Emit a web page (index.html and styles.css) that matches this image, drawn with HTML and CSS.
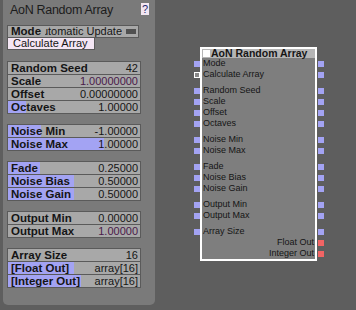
FILE: index.html
```html
<!DOCTYPE html>
<html lang="en">

<head>
    <meta charset="UTF-8">
    <title>AoN Random Array</title>
    <link rel="stylesheet" href="styles.css">
</head>

<body>
    <!-- Parameter panel -->
    <div class="panel">
        <div class="panel-head">
            <span class="panel-title">AoN Random Array</span>
            <span class="help">?</span>
        </div>

        <div class="mode-row">
            <span class="label">Mode</span>
            <span class="mode-value"><span>Automatic Update</span></span>
            <span class="mode-swatch"></span>
        </div>
        <div class="calc-btn">Calculate Array</div>

        <div class="group">
            <div class="row"><span class="label">Random Seed</span><span class="value">42</span></div>
            <div class="row"><span class="label">Scale</span><span class="value purple">1.00000000</span></div>
            <div class="row"><span class="label">Offset</span><span class="value">0.00000000</span></div>
            <div class="row" style="--fill: 14%"><span class="label">Octaves</span><span class="value">1.00000</span></div>
        </div>

        <div class="group">
            <div class="row" style="--fill: 25%"><span class="label">Noise Min</span><span class="value">-1.00000</span></div>
            <div class="row" style="--fill: 73%"><span class="label">Noise Max</span><span class="value">1.00000</span></div>
        </div>

        <div class="group">
            <div class="row" style="--fill: 24%"><span class="label">Fade</span><span class="value">0.25000</span></div>
            <div class="row" style="--fill: 50%"><span class="label">Noise Bias</span><span class="value">0.50000</span></div>
            <div class="row" style="--fill: 50%"><span class="label">Noise Gain</span><span class="value">0.50000</span></div>
        </div>

        <div class="group">
            <div class="row"><span class="label">Output Min</span><span class="value">0.00000</span></div>
            <div class="row"><span class="label">Output Max</span><span class="value purple">1.00000</span></div>
        </div>

        <div class="group">
            <div class="row"><span class="label">Array Size</span><span class="value">16</span></div>
            <div class="row" style="--fill: 50%"><span class="label">[Float Out]</span><span class="value">array[16]</span></div>
            <div class="row" style="--fill: 55%"><span class="label">[Integer Out]</span><span class="value">array[16]</span></div>
        </div>
    </div>

    <!-- Node on the canvas -->
    <div class="node">
        <div class="node-title"><span class="node-check"></span>AoN Random Array</div>

        <div class="node-group">
            <div class="node-row"><span class="pin in"></span>Mode<span class="pin out"></span></div>
            <div class="node-row"><span class="pin in hollow"></span>Calculate Array<span class="pin out"></span></div>
        </div>
        <div class="node-group">
            <div class="node-row"><span class="pin in"></span>Random Seed<span class="pin out"></span></div>
            <div class="node-row"><span class="pin in"></span>Scale<span class="pin out"></span></div>
            <div class="node-row"><span class="pin in"></span>Offset<span class="pin out"></span></div>
            <div class="node-row"><span class="pin in"></span>Octaves<span class="pin out"></span></div>
        </div>
        <div class="node-group">
            <div class="node-row"><span class="pin in"></span>Noise Min<span class="pin out"></span></div>
            <div class="node-row"><span class="pin in"></span>Noise Max<span class="pin out"></span></div>
        </div>
        <div class="node-group">
            <div class="node-row"><span class="pin in"></span>Fade<span class="pin out"></span></div>
            <div class="node-row"><span class="pin in"></span>Noise Bias<span class="pin out"></span></div>
            <div class="node-row"><span class="pin in"></span>Noise Gain<span class="pin out"></span></div>
        </div>
        <div class="node-group">
            <div class="node-row"><span class="pin in"></span>Output Min<span class="pin out"></span></div>
            <div class="node-row"><span class="pin in"></span>Output Max<span class="pin out"></span></div>
        </div>
        <div class="node-group">
            <div class="node-row"><span class="pin in"></span>Array Size<span class="pin out"></span></div>
            <div class="node-row output">Float Out<span class="pin out red"></span></div>
            <div class="node-row output">Integer Out<span class="pin out red"></span></div>
        </div>
    </div>
</body>

</html>
```

FILE: styles.css
```css
body {
    margin: 0;
    padding: 0;
    height: 310px;
    overflow: hidden;
    display: flex;
    align-items: flex-start;
    background: #5e5e5e;
    font-family: "Liberation Sans", Arial, sans-serif;
    color: #151515;
}

/* Parameter panel */
.panel {
    margin-left: 3px;
    width: 152px;
    height: 305px;
    box-sizing: border-box;
    padding: 3px 0 0 4px;
    background: #7a7a7a;
    border-radius: 0 0 5px 5px;
}

.panel-head {
    width: 142px;
    height: 14px;
    padding-left: 3px;
    box-sizing: border-box;
    display: flex;
    justify-content: space-between;
    align-items: flex-start;
}

.panel-title {
    font-size: 12.5px;
    line-height: 14px;
    letter-spacing: -0.3px;
    color: #1c1c1c;
}

.help {
    width: 8px;
    height: 12px;
    background: #f2e6f2;
    color: #1e2a70;
    font-size: 11px;
    line-height: 12px;
    text-align: center;
}

.mode-row {
    margin-top: 8px;
    width: 132px;
    height: 13px;
    box-sizing: border-box;
    border: 1px solid #5a5a5a;
    background: #a8a8a8;
    display: flex;
    align-items: center;
}

.label {
    padding-left: 3px;
    font-size: 11.5px;
    font-weight: bold;
    line-height: 11px;
    white-space: nowrap;
}

.mode-value {
    flex: 1;
    display: flex;
    justify-content: flex-end;
    overflow: hidden;
    margin-left: 4px;
    font-size: 11px;
    line-height: 11px;
    white-space: nowrap;
}

.mode-swatch {
    width: 10px;
    height: 5px;
    margin: 0 2px 0 4px;
    background: #505050;
}

.calc-btn {
    margin-top: -1px;
    width: 88px;
    height: 13px;
    box-sizing: border-box;
    border: 1px solid #5a5a5a;
    background: #f4e6f4;
    padding-left: 5px;
    font-size: 11px;
    line-height: 11px;
}

.group {
    margin-top: 10px;
    width: 132px;
    border: 1px solid #5a5a5a;
}

.calc-btn + .group {
    margin-top: 11px;
}

.row {
    --fill: 0%;
    height: 12px;
    display: flex;
    justify-content: space-between;
    align-items: center;
    background: linear-gradient(to right, #a3a3f3 var(--fill), #a8a8a8 var(--fill));
}

.row + .row {
    border-top: 1px solid #5a5a5a;
}

.value {
    padding-right: 2px;
    font-size: 11px;
    line-height: 12px;
}

.value.purple {
    color: #4a1a4a;
}

/* Node on the canvas */
.node {
    position: relative;
    margin: 47px 0 0 45px;
    width: 117px;
    box-sizing: border-box;
    border: 2px solid #fff;
    background: #7e7e7e;
    font-size: 9px;
}

.node-title {
    height: 9px;
    line-height: 9px;
    display: flex;
    align-items: center;
    background: #b5b5b5;
    font-size: 10.5px;
    font-weight: bold;
    color: #151515;
    white-space: nowrap;
}

.node-check {
    width: 7px;
    height: 7px;
    margin: 0 1px 0 1px;
    background: #fff;
}

.node-group + .node-group {
    margin-top: 5px;
}

.node-row {
    position: relative;
    height: 11px;
    line-height: 11px;
    padding: 0 1px;
    white-space: nowrap;
}

.node-row.output {
    text-align: right;
}

.pin {
    position: absolute;
    top: 3px;
    width: 6px;
    height: 6px;
    background: #a3a3f3;
}

.pin.in {
    left: -8px;
}

.pin.out {
    right: -9px;
}

.pin.hollow {
    box-sizing: border-box;
    border: 1px solid #fff;
    background: #888;
}

.pin.red {
    background: #f26464;
}
```
